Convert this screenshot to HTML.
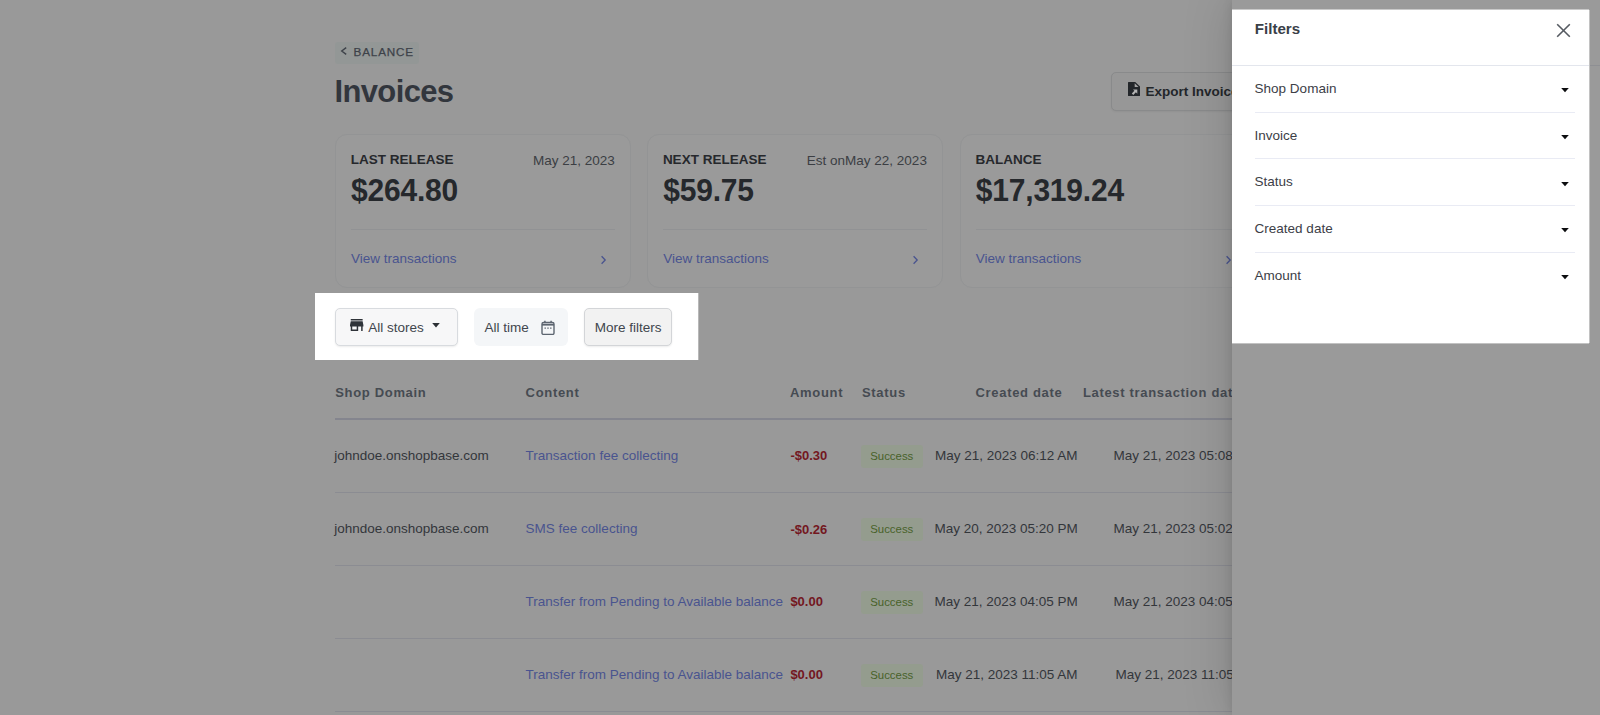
<!DOCTYPE html>
<html lang="en">
<head>
<meta charset="utf-8">
<title>Invoices</title>
<style>
*{box-sizing:border-box;margin:0;padding:0}
html,body{width:1600px;height:715px;overflow:hidden}
body{font-family:"Liberation Sans",sans-serif;font-size:13.5px;color:#33363b;background:#999;position:relative}
.abs{position:absolute}
h1{transform:scaleY(1.03);transform-origin:0 60%}
.page{position:absolute;left:0;top:0;width:1600px;height:715px;overflow:hidden}
.back{position:absolute;left:335px;top:42px;width:83.5px;height:22px;background:#939796;border-radius:3px}
.back span{position:absolute;left:18.6px;top:3.2px;font-size:11.7px;letter-spacing:.82px;color:#3d4249;line-height:14px;-webkit-text-stroke:.25px #3d4249;white-space:nowrap}
.back svg{position:absolute;left:5px;top:4px}
h1{position:absolute;left:334.4px;top:74px;font-size:31px;line-height:36px;font-weight:bold;color:#32363d;letter-spacing:-.62px;white-space:nowrap}
.export{position:absolute;left:1111px;top:72px;width:160px;height:38.6px;border:1px solid #898a8b;border-radius:5px;background:#979797;box-shadow:0 1px 2px rgba(0,0,0,.05)}
.export span{position:absolute;left:33.5px;top:11.4px;font-weight:bold;font-size:13.5px;line-height:16px;color:#23262a;white-space:nowrap}
.export svg{position:absolute;left:15.8px;top:9.4px}
.card{position:absolute;top:134px;width:296px;height:153.6px;border:1px solid #939495;border-radius:12px;background:#9a9a9a}
.card .lbl{position:absolute;left:14.7px;top:17.1px;font-size:13.5px;font-weight:bold;color:#26282c;line-height:16px;white-space:nowrap}
.card .dt{position:absolute;right:15.3px;top:17.6px;font-size:13.5px;color:#3b3e43;line-height:16px;white-space:nowrap}
.card .amt{position:absolute;left:15px;top:38.8px;font-size:30px;letter-spacing:-.2px;font-weight:bold;color:#25282c;line-height:34px;transform:scaleY(1.045);transform-origin:0 70%;white-space:nowrap}
.card .hr{position:absolute;left:15px;right:15px;top:94px;height:1px;background:#919294}
.card .lnk{position:absolute;left:15px;top:116px;font-size:13.5px;color:#49548f;line-height:16px;white-space:nowrap}
.card .chev{position:absolute;right:22.8px;top:119.7px}
.th{position:absolute;top:385.3px;font-size:13px;font-weight:bold;letter-spacing:.68px;color:#464b52;line-height:16px;white-space:nowrap}
.hline{position:absolute;left:335px;width:930px;height:1px;background:#8b8c92}
.td{position:absolute;font-size:13.5px;line-height:16px;white-space:nowrap;color:#33363b}
.lk{color:#49548f}
.neg{color:#73171f;font-weight:bold;font-size:13px}
.badge{position:absolute;left:861px;width:61.5px;height:22.8px;border-radius:3px;background:#949c8e;color:#48622a;font-size:11.4px;line-height:22.8px;text-align:center}
.panel{position:absolute;left:1232px;top:0;width:368px;height:715px;background:#9a9a9a;box-shadow:0 0 10px rgba(0,0,0,.1),0 0 46px rgba(0,0,0,.17)}
.panel .hb{position:absolute;left:0;right:0;top:65px;height:1px;background:#8e8f93}
.hl1{position:absolute;left:315px;top:293px;width:383px;height:67px;background:#fff;box-shadow:1px 0 0 #b8b8b8}
.btn{position:absolute;top:15px;height:38px;border:1px solid #d8dbdf;border-radius:5px;background:#f7f7f8;box-shadow:0 1px 2px rgba(0,0,0,.08);font-size:13.5px;color:#41464d;white-space:nowrap}
.btn span{position:absolute;top:10.5px;line-height:16px}
.hl2{position:absolute;left:1232px;top:10px;width:357px;height:333px;background:#fff;box-shadow:0 -1px 0 #c9c9c9,0 1px 0 #c2c2c2,1px 0 0 #c2c2c2}
.hl2 .ttl{position:absolute;left:22.8px;top:9.8px;font-size:15.1px;font-weight:bold;line-height:18px;color:#3a4048;white-space:nowrap}
.hl2 .hb{position:absolute;left:0;right:0;top:55px;height:1px;background:#e3e6ed}
.hl2 .it{position:absolute;left:22.6px;font-size:13.5px;line-height:16px;color:#3c4047;white-space:nowrap}
.hl2 .sep{position:absolute;left:22.6px;width:320.3px;height:1px;background:#e9ebf4}
.hl2 .car{position:absolute;left:328.6px}
</style>
</head>
<body>
<div class="page">
  <div class="back"><svg width="8" height="10" viewBox="0 0 8 10"><path d="M6.2 1.6 L1.7 5 L6.2 8.4" fill="none" stroke="#3d4249" stroke-width="1.35"/></svg><span>BALANCE</span></div>
  <h1>Invoices</h1>
  <div class="export"><svg width="12" height="14" viewBox="0 0 12 14"><path d="M.6 0H7.2L12 4.6V13.4a.6.6 0 0 1-.6.6H.6a.6.6 0 0 1-.6-.6V.6A.6.6 0 0 1 .6 0z" fill="#23262a"/><path d="M6.7 1.3V5.1H10.5z" fill="#a4a4a4"/><path d="M5 7.4H9.3V11.7L7.9 10.3L5.3 12.9L3.8 11.4L6.4 8.8z" fill="#b4b4b4"/></svg><span>Export Invoices</span></div>

  <div class="card" style="left:335px"><div class="lbl">LAST RELEASE</div><div class="dt">May 21, 2023</div><div class="amt">$264.80</div><div class="hr"></div><div class="lnk">View transactions</div><svg class="chev" width="7" height="10" viewBox="0 0 7 10"><path d="M1.6 1.2 L5.2 5 L1.6 8.8" fill="none" stroke="#49548f" stroke-width="1.3"/></svg></div>
  <div class="card" style="left:647.2px"><div class="lbl">NEXT RELEASE</div><div class="dt">Est onMay 22, 2023</div><div class="amt">$59.75</div><div class="hr"></div><div class="lnk">View transactions</div><svg class="chev" width="7" height="10" viewBox="0 0 7 10"><path d="M1.6 1.2 L5.2 5 L1.6 8.8" fill="none" stroke="#49548f" stroke-width="1.3"/></svg></div>
  <div class="card" style="left:959.8px"><div class="lbl">BALANCE</div><div class="amt">$17,319.24</div><div class="hr"></div><div class="lnk">View transactions</div><svg class="chev" width="7" height="10" viewBox="0 0 7 10"><path d="M1.6 1.2 L5.2 5 L1.6 8.8" fill="none" stroke="#49548f" stroke-width="1.3"/></svg></div>

  <div class="th" style="left:335.2px">Shop Domain</div>
  <div class="th" style="left:525.6px">Content</div>
  <div class="th" style="left:790px">Amount</div>
  <div class="th" style="left:862px">Status</div>
  <div class="th" style="left:975.5px">Created date</div>
  <div class="th" style="left:1082.9px">Latest transaction date</div>
  <div class="hline" style="top:418px;height:1.6px;background:#84858e"></div>

  <div class="td" style="left:334.2px;top:448.1px">johndoe.onshopbase.com</div>
  <div class="td lk" style="left:525.6px;top:448.1px">Transaction fee collecting</div>
  <div class="td neg" style="left:790.4px;top:448.3px">-$0.30</div>
  <div class="badge" style="top:444.8px"><span style="display:inline-block">Success</span></div>
  <div class="td" style="left:935px;top:448.1px">May 21, 2023 06:12 AM</div>
  <div class="td" style="left:1113.5px;top:448.1px">May 21, 2023 05:08 AM</div>
  <div class="hline" style="top:492px"></div>

  <div class="td" style="left:334.2px;top:521.3px">johndoe.onshopbase.com</div>
  <div class="td lk" style="left:525.6px;top:521.3px">SMS fee collecting</div>
  <div class="td neg" style="left:790.4px;top:521.5px">-$0.26</div>
  <div class="badge" style="top:518px"><span style="display:inline-block">Success</span></div>
  <div class="td" style="left:934.4px;top:521.3px">May 20, 2023 05:20 PM</div>
  <div class="td" style="left:1113.5px;top:521.3px">May 21, 2023 05:02 AM</div>
  <div class="hline" style="top:565px"></div>

  <div class="td lk" style="left:525.6px;top:594.1px">Transfer from Pending to Available balance</div>
  <div class="td neg" style="left:790.4px;top:594.3px">$0.00</div>
  <div class="badge" style="top:591px"><span style="display:inline-block">Success</span></div>
  <div class="td" style="left:934.4px;top:594.1px">May 21, 2023 04:05 PM</div>
  <div class="td" style="left:1113.5px;top:594.1px">May 21, 2023 04:05 PM</div>
  <div class="hline" style="top:638px"></div>

  <div class="td lk" style="left:525.6px;top:667.1px">Transfer from Pending to Available balance</div>
  <div class="td neg" style="left:790.4px;top:667.3px">$0.00</div>
  <div class="badge" style="top:664px"><span style="display:inline-block">Success</span></div>
  <div class="td" style="left:936px;top:667.1px">May 21, 2023 11:05 AM</div>
  <div class="td" style="left:1115.5px;top:667.1px">May 21, 2023 11:05 AM</div>
  <div class="hline" style="top:711px"></div>

  <div class="panel"><div class="hb"></div></div>
</div>

<div class="hl1">
  <div class="btn" style="left:19.8px;width:122.8px">
    <svg class="abs" style="left:14.4px;top:10.1px" width="13.4" height="11.9" viewBox="3 4 18 16"><path d="M20 4H4v2h16V4zm1 10v-2l-1-5H4l-1 5v2h1v6h10v-6h4v6h2v-6h1zm-9 4H6v-4h6v4z" fill="#2f3339"/></svg>
    <span style="left:32.4px">All stores</span>
    <svg class="abs" style="left:95.8px;top:14.3px" width="8" height="5" viewBox="0 0 8 5"><path d="M.2 0h7.6L4 4.6z" fill="#2c3035"/></svg>
  </div>
  <div class="btn" style="left:158.8px;width:94px;border-color:transparent;background:#f4f6f8;box-shadow:none;border-radius:6px">
    <span style="left:9.8px">All time</span>
    <svg class="abs" style="left:66.5px;top:10.5px" width="14" height="15" viewBox="0 0 14 15"><rect x="1" y="2.4" width="12" height="12.1" rx="1.6" fill="none" stroke="#5c6570" stroke-width="1.4"/><path d="M1 4.6h12" stroke="#5c6570" stroke-width="2"/><path d="M3.9 .8v2.2M10.1 .8v2.2" stroke="#5c6570" stroke-width="1.5"/><path d="M3.5 8.1h1.4M6.3 8.1h1.4M9.1 8.1h1.4" stroke="#5c6570" stroke-width="1.4"/></svg>
  </div>
  <div class="btn" style="left:268.8px;width:88.6px;background:#f2f2f2;border-color:#d3d5d8"><span style="left:9.9px">More filters</span></div>
</div>

<div class="hl2">
  <div class="ttl">Filters</div>
  <svg class="abs" style="left:323.7px;top:12.5px" width="15" height="15" viewBox="0 0 15 15"><path d="M1.2 1.2 L13.8 13.8 M13.8 1.2 L1.2 13.8" stroke="#565b62" stroke-width="1.6" fill="none"/></svg>
  <div class="hb"></div>
  <div class="it" style="top:70.6px">Shop Domain</div><svg class="car" style="top:77.7px" width="8" height="5" viewBox="0 0 8 5"><path d="M.2 0h7.6L4 4.3z" fill="#0c0d0f"/></svg>
  <div class="sep" style="top:101.5px"></div>
  <div class="it" style="top:117.6px">Invoice</div><svg class="car" style="top:125.2px" width="8" height="5" viewBox="0 0 8 5"><path d="M.2 0h7.6L4 4.3z" fill="#0c0d0f"/></svg>
  <div class="sep" style="top:148.1px"></div>
  <div class="it" style="top:164.0px">Status</div><svg class="car" style="top:171.6px" width="8" height="5" viewBox="0 0 8 5"><path d="M.2 0h7.6L4 4.3z" fill="#0c0d0f"/></svg>
  <div class="sep" style="top:195.0px"></div>
  <div class="it" style="top:211.0px">Created date</div><svg class="car" style="top:218.4px" width="8" height="5" viewBox="0 0 8 5"><path d="M.2 0h7.6L4 4.3z" fill="#0c0d0f"/></svg>
  <div class="sep" style="top:241.7px"></div>
  <div class="it" style="top:257.6px">Amount</div><svg class="car" style="top:264.8px" width="8" height="5" viewBox="0 0 8 5"><path d="M.2 0h7.6L4 4.3z" fill="#0c0d0f"/></svg>
</div>
</body>
</html>
